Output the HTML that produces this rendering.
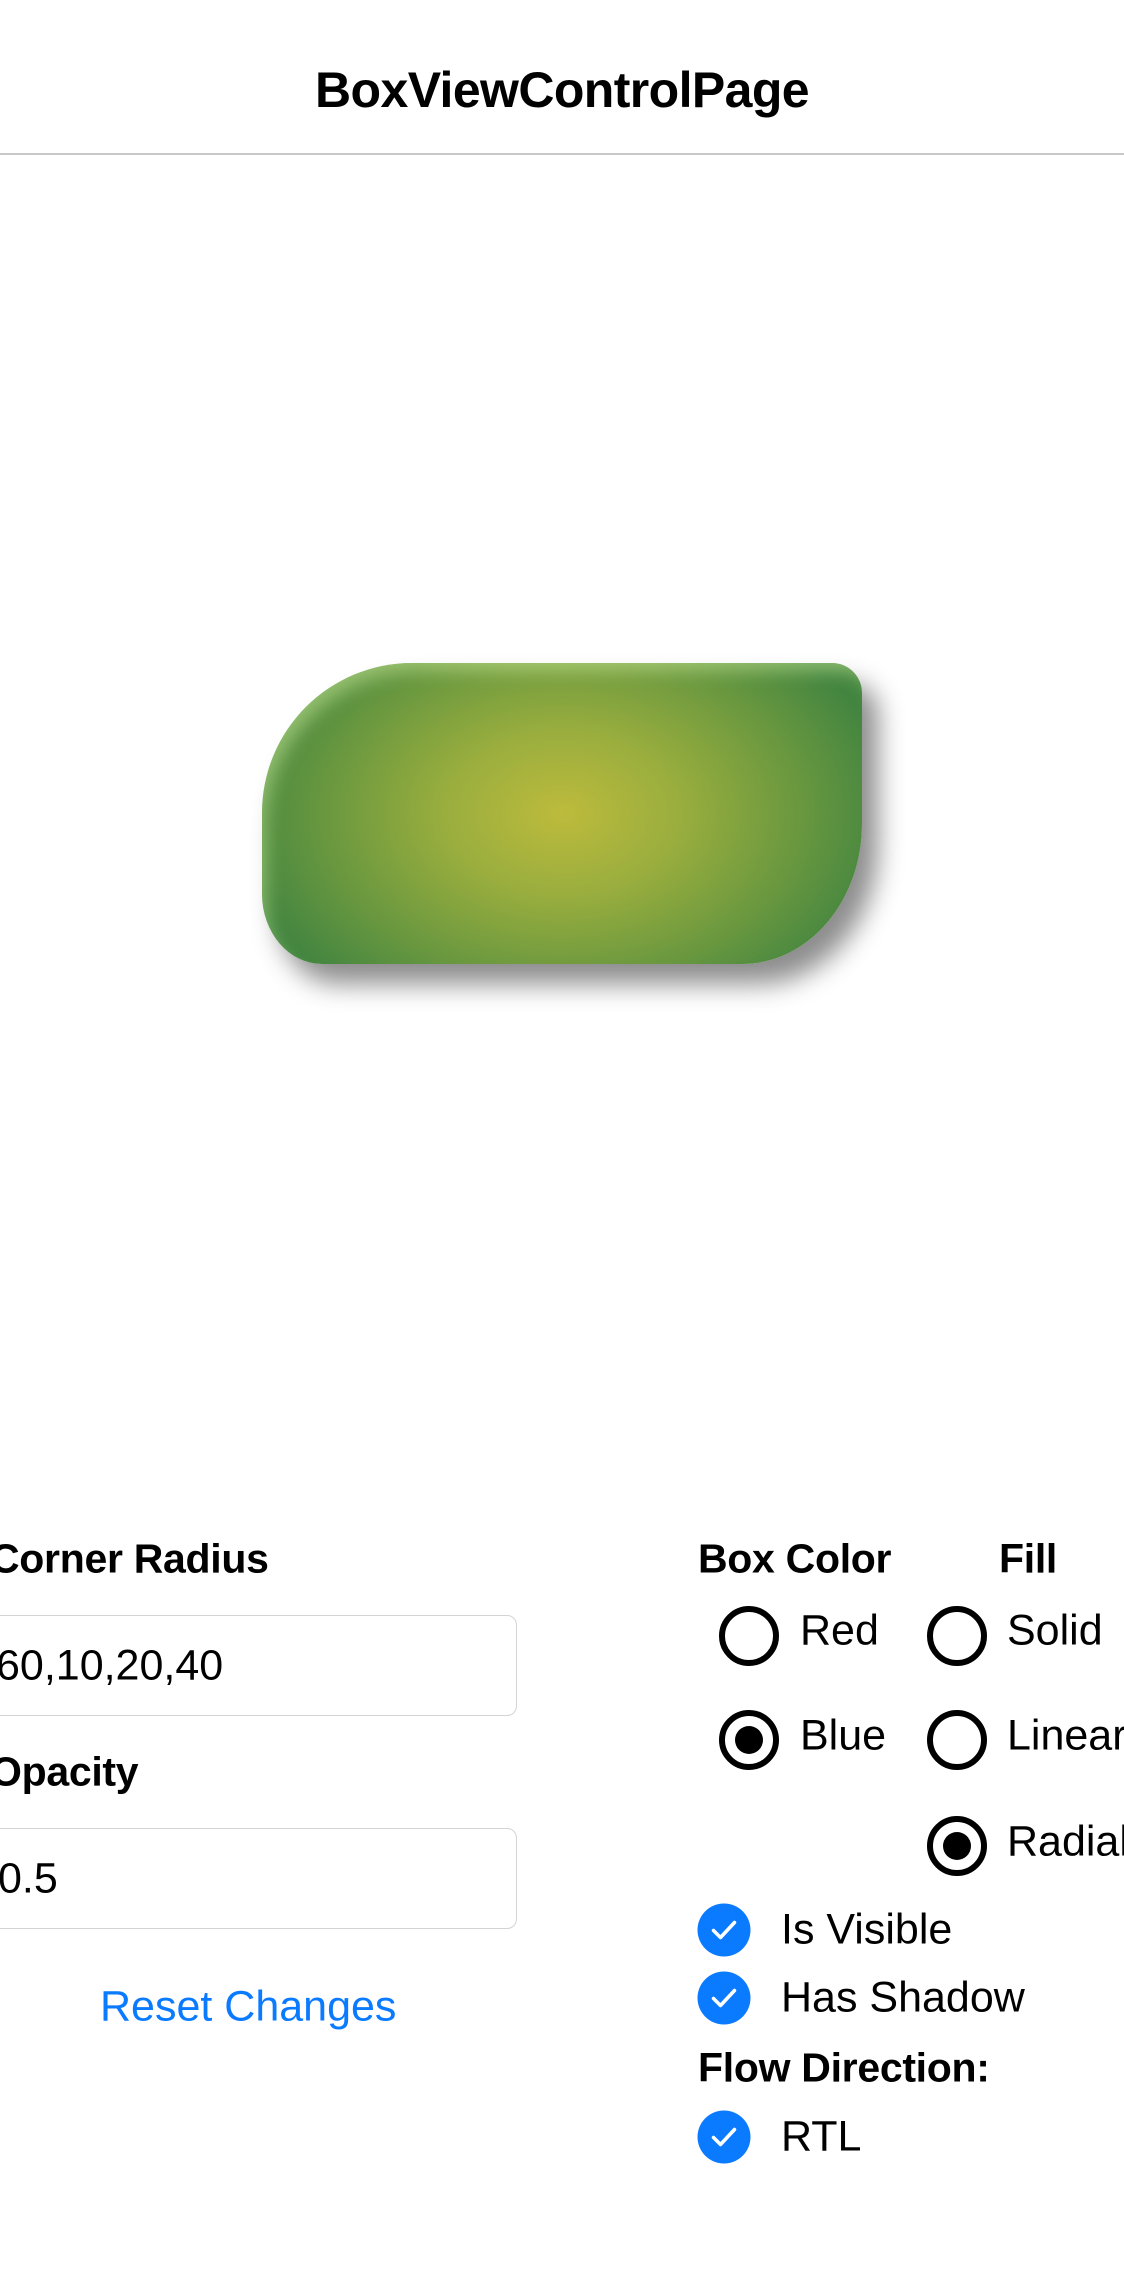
<!DOCTYPE html>
<html><head><meta charset="utf-8"><style>
body{margin:0;width:1124px;height:2286px;background:#fff;position:relative;overflow:hidden;font-family:"Liberation Sans",Arial,sans-serif;color:#000}
.a{position:absolute;white-space:nowrap;line-height:1;transform:translateY(-50%)}
.b{font-weight:bold;font-size:41px;letter-spacing:-0.3px}
.r{font-size:43px;letter-spacing:0}
.entry{position:absolute;left:-20px;width:537px;height:101px;border:1.5px solid #d4d4d4;border-radius:10px;box-sizing:border-box}
.rad{position:absolute;width:60px;height:60px;border:6px solid #000;border-radius:50%;box-sizing:border-box;transform:translate(-50%,-50%)}
.rad.on::after{content:"";position:absolute;left:50%;top:50%;width:28px;height:28px;background:#000;border-radius:50%;transform:translate(-50%,-50%)}
.chk{position:absolute;width:53px;height:53px;background:#0a7aff;border-radius:50%;transform:translate(-50%,-50%)}
</style></head><body>
<div class="a" style="left:0;width:1124px;text-align:center;top:90px;font-weight:bold;font-size:50px;letter-spacing:-0.6px">BoxViewControlPage</div>
<div style="position:absolute;left:0;top:153px;width:1124px;height:2px;background:#c8c8c8"></div>

<div style="position:absolute;left:262px;top:663px;width:600px;height:301px;border-radius:150px 30px 120px 60px / 150px 30px 140px 70px;background:radial-gradient(ellipse 330px 230px at 50% 50%,#bdbb3c 0%,#9aae3e 35%,#6c993f 70%,#438540 100%);box-shadow:16px 20px 26px rgba(0,0,0,0.45),inset 10px 14px 18px -6px rgba(230,255,170,0.45)"></div>

<div class="a b" style="left:-10px;top:1559px">Corner Radius</div>
<div class="entry" style="top:1615px"></div>
<div class="a r" style="left:-4px;top:1666px">60,10,20,40</div>
<div class="a b" style="left:-10px;top:1772px">Opacity</div>
<div class="entry" style="top:1828px"></div>
<div class="a r" style="left:-2px;top:1879px">0.5</div>
<div class="a r" style="left:100px;top:2007px;color:#0a7aff">Reset Changes</div>

<div class="a b" style="left:698px;top:1559px">Box Color</div>
<div class="a b" style="left:999px;top:1559px">Fill</div>
<div class="rad" style="left:749px;top:1636px"></div>
<div class="a r" style="left:800px;top:1631px">Red</div>
<div class="rad" style="left:957px;top:1636px"></div>
<div class="a r" style="left:1007px;top:1631px">Solid</div>
<div class="rad on" style="left:749px;top:1740px"></div>
<div class="a r" style="left:800px;top:1736px">Blue</div>
<div class="rad" style="left:957px;top:1740px"></div>
<div class="a r" style="left:1007px;top:1736px">Linear</div>
<div class="rad on" style="left:957px;top:1846px"></div>
<div class="a r" style="left:1007px;top:1842px">Radial</div>

<div class="chk" style="left:724px;top:1930px"><svg width="53" height="53" viewBox="0 0 53 53"><path d="M16 27 L23 34 L37 19" fill="none" stroke="#fff" stroke-width="3.5" stroke-linecap="round" stroke-linejoin="round"/></svg></div>
<div class="a r" style="left:781px;top:1930px">Is Visible</div>
<div class="chk" style="left:724px;top:1998px"><svg width="53" height="53" viewBox="0 0 53 53"><path d="M16 27 L23 34 L37 19" fill="none" stroke="#fff" stroke-width="3.5" stroke-linecap="round" stroke-linejoin="round"/></svg></div>
<div class="a r" style="left:781px;top:1998px">Has Shadow</div>
<div class="a b" style="left:698px;top:2068px">Flow Direction:</div>
<div class="chk" style="left:724px;top:2137px"><svg width="53" height="53" viewBox="0 0 53 53"><path d="M16 27 L23 34 L37 19" fill="none" stroke="#fff" stroke-width="3.5" stroke-linecap="round" stroke-linejoin="round"/></svg></div>
<div class="a r" style="left:781px;top:2137px">RTL</div>
</body></html>
